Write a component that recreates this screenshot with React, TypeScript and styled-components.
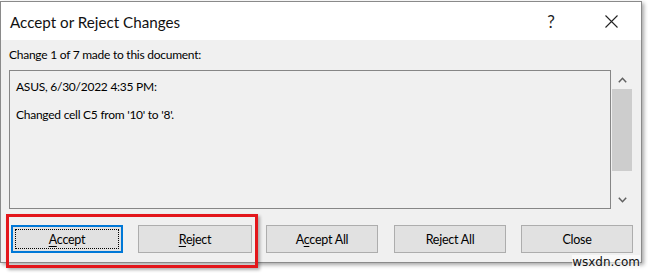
import React from "react";
import styled, { createGlobalStyle } from "styled-components";

const Global = createGlobalStyle`
  html, body { margin: 0; padding: 0; background: #ffffff; }
  body { font-family: Lato, "Noto Sans", sans-serif; }
`;

const Page = styled.div`
  position: relative;
  width: 648px;
  height: 274px;
  padding-top: 1px;
  box-sizing: border-box;
`;

const Dialog = styled.div`
  width: 642px;
  height: 262px;
  box-sizing: border-box;
  border: 1px solid #8a8a8a;
  background: #f0f0f0;
  box-shadow: 2px 2px 4px rgba(0, 0, 0, 0.35);
  display: flex;
  flex-direction: column;
`;

const TitleBar = styled.div`
  height: 38px;
  background: #ffffff;
  display: flex;
  align-items: center;
  padding-left: 9px;
  padding-top: 1px;
  box-sizing: border-box;
`;

const Title = styled.div`
  flex: 1;
  font-size: 15.2px;
  color: #111;
`;

const TitleButton = styled.div<{ $w: number; $mr?: number }>`
  width: ${(p) => p.$w}px;
  margin-right: ${(p) => p.$mr ?? 0}px;
  height: 30px;
  display: flex;
  align-items: center;
  justify-content: center;
  color: #222;
  font-size: 17px;
`;

const Body = styled.div`
  flex: 1;
  display: flex;
  flex-direction: column;
  padding: 7px 0 0 8px;
  font-size: 12px;
  letter-spacing: -0.25px;
`;

const Label = styled.div`
  color: #000;
  height: 23px;
`;

const BoxRow = styled.div`
  display: flex;
  height: 139px;
  gap: 1px;
`;

const TextBox = styled.div`
  width: 602px;
  box-sizing: border-box;
  border: 1px solid #868686;
  background: #f0f0f0;
  padding: 9px 0 0 6px;
  line-height: 14px;
  color: #000;
`;

const Line = styled.div`
  height: 14px;
  white-space: pre;
`;

const Scrollbar = styled.div`
  width: 20px;
  display: flex;
  flex-direction: column;
  align-items: stretch;
`;

const Arrow = styled.div`
  height: 19px;
  display: flex;
  align-items: center;
  justify-content: center;
`;

const Thumb = styled.div`
  flex: 1;
  background: #cdcdcd;
  margin: 0 0 19px 0;
`;

const ButtonRow = styled.div`
  display: flex;
  margin-top: 16px;
  padding-left: 2px;
`;

const Button = styled.div<{ $focused?: boolean; $w: number; $ml: number }>`
  width: ${(p) => p.$w}px;
  margin-left: ${(p) => p.$ml}px;
  height: 28px;
  box-sizing: border-box;
  background: #e1e1e1;
  border: ${(p) => (p.$focused ? "2px solid #0078d7" : "1px solid #adadad")};
  display: flex;
  align-items: center;
  justify-content: center;
  font-size: 12.5px;
  color: #000;
  position: relative;
  &::after {
    content: "";
    display: ${(p) => (p.$focused ? "block" : "none")};
    position: absolute;
    inset: 2px;
    border: 1px dotted #000;
  }
`;

const U = styled.span`
  text-decoration: underline;
  text-underline-offset: 2px;
`;

const Highlight = styled.div`
  position: absolute;
  left: 6px;
  top: 214px;
  width: 252px;
  height: 54px;
  box-sizing: border-box;
  border: 3px solid #e3161b;
  box-shadow: 2px 2px 3px rgba(0, 0, 0, 0.3);
`;

const Watermark = styled.div`
  position: absolute;
  right: 8px;
  top: 255px;
  font-family: "DejaVu Sans", sans-serif;
  font-size: 12px;
  color: #111;
  background: rgba(255, 255, 255, 0.6);
  line-height: 15px;
`;

const Chevron = ({ up }: { up?: boolean }) => (
  <svg width="9" height="6" viewBox="0 0 9 6">
    <path
      d={up ? "M0.8 5.2 L4.5 1.3 L8.2 5.2" : "M0.8 0.8 L4.5 4.7 L8.2 0.8"}
      fill="none"
      stroke="#606060"
      strokeWidth="1.5"
    />
  </svg>
);

export default function App() {
  return (
    <>
      <Global />
      <Page>
        <Dialog>
          <TitleBar>
            <Title>Accept or Reject Changes</Title>
            <TitleButton $w={30} $mr={15}>?</TitleButton>
            <TitleButton $w={60}>
              <svg width="13" height="13" viewBox="0 0 13 13">
                <path d="M0.5 0.5 L12.5 12.5 M12.5 0.5 L0.5 12.5" stroke="#222" strokeWidth="1.1" fill="none" />
              </svg>
            </TitleButton>
          </TitleBar>
          <Body>
            <Label>Change 1 of 7 made to this document:</Label>
            <BoxRow>
              <TextBox>
                <Line>ASUS, 6/30/2022 4:35 PM:</Line>
                <Line> </Line>
                <Line>Changed cell C5 from '10' to '8'.</Line>
              </TextBox>
              <Scrollbar>
                <Arrow>
                  <Chevron up />
                </Arrow>
                <Thumb />
                <Arrow>
                  <Chevron />
                </Arrow>
              </Scrollbar>
            </BoxRow>
            <ButtonRow>
              <Button $focused $w={112} $ml={0}>
                <span>
                  <U>A</U>ccept
                </span>
              </Button>
              <Button $w={114} $ml={15}>
                <span>
                  <U>R</U>eject
                </span>
              </Button>
              <Button $w={112} $ml={14}>
                <span>
                  A<U>c</U>cept All
                </span>
              </Button>
              <Button $w={112} $ml={16}>Reject All</Button>
              <Button $w={112} $ml={15}>Close</Button>
            </ButtonRow>
          </Body>
        </Dialog>
        <Highlight />
        <Watermark>wsxdn.com</Watermark>
      </Page>
    </>
  );
}
